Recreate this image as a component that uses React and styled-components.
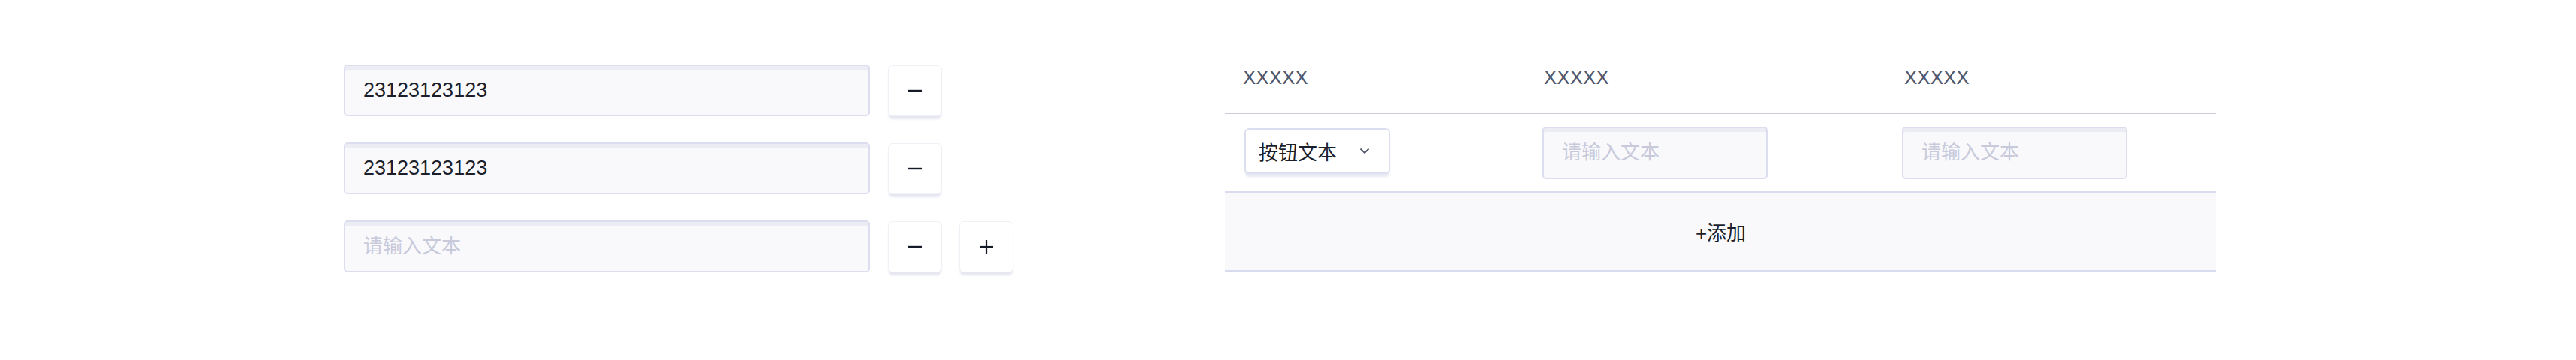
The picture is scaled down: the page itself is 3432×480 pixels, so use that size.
import React from 'react';
import styled, { createGlobalStyle } from 'styled-components';

const GlobalStyle = createGlobalStyle`
  body {
    margin: 0;
    background: #ffffff;
    font-family: "Liberation Sans", "Noto Sans CJK SC", sans-serif;
  }
`;

const Page = styled.div`
  display: flex;
  align-items: flex-start;
  width: 3432px;
  height: 480px;
  padding: 72px 0 0 458px;
  box-sizing: border-box;
`;

const Form = styled.div`
  display: flex;
  flex-direction: column;
  gap: 35px;
  margin-top: 14px;
`;

const FormRow = styled.div`
  display: flex;
  align-items: center;
`;

const TextInput = styled.input`
  box-sizing: border-box;
  width: ${({ w }) => w}px;
  height: ${({ h }) => h}px;
  padding: 0 24px;
  border: 2px solid #dcdeef;
  border-radius: 5px;
  background: #f9f9fc;
  box-shadow: inset 0 6px 0 -1px #ebecf4;
  font-family: "Liberation Sans", "Noto Sans CJK SC", sans-serif;
  font-size: 27px;
  color: #1b1f2b;
  outline: none;

  &::placeholder {
    color: #c8cadb;
    font-size: 26px;
  }
`;

const IconButton = styled.button`
  display: flex;
  align-items: center;
  justify-content: center;
  box-sizing: border-box;
  width: 72px;
  height: 68px;
  margin-left: ${({ gap }) => gap}px;
  padding: 0;
  background: #ffffff;
  border: 1px solid #f0f1f6;
  border-radius: 6px;
  box-shadow: 0 5px 3px -1px #e6e7f1;
  cursor: pointer;
`;

const Table = styled.div`
  display: grid;
  grid-template-columns: 401px 480px 440px;
  margin-left: 282px;
`;

const HeadCell = styled.div`
  padding: 11px 24px 27px;
  line-height: 40px;
  font-size: 26px;
  color: #4f576c;
  border-bottom: 2px solid #c9cddc;
`;

const BodyCell = styled.div`
  display: flex;
  align-items: center;
  height: 103px;
  padding-left: ${({ pad }) => pad}px;
  border-bottom: 2px solid #d9dbee;
`;

const AddRow = styled.div`
  grid-column: 1 / -1;
  display: flex;
  align-items: center;
  justify-content: center;
  height: 103px;
  background: #f9f9fb;
  border-bottom: 2px solid #d9dbee;
  font-size: 26px;
  color: #1b1f2b;
  cursor: pointer;
`;

const Select = styled.div`
  display: flex;
  align-items: center;
  box-sizing: border-box;
  width: 194px;
  height: 61px;
  margin-top: -5px;
  padding: 0 0 0 17px;
  border: 2px solid #dcdff0;
  border-radius: 6px;
  background: #ffffff;
  box-shadow: 0 5px 3px -1px #e8e9f2;
  font-size: 26px;
  color: #1b1f2b;
`;

const Chevron = styled.svg`
  margin-left: 30px;
`;

const Minus = () => (
  <svg width="20" height="20" viewBox="0 0 20 20">
    <line x1="1" y1="10" x2="19" y2="10" stroke="#151a28" strokeWidth="2.4" />
  </svg>
);

const Plus = () => (
  <svg width="22" height="22" viewBox="0 0 22 22">
    <line x1="2" y1="11" x2="20" y2="11" stroke="#151a28" strokeWidth="2.2" />
    <line x1="11" y1="2" x2="11" y2="20" stroke="#151a28" strokeWidth="2.2" />
  </svg>
);

const rows = ['23123123123', '23123123123', ''];

export default function App() {
  return (
    <>
      <GlobalStyle />
      <Page>
        <Form>
          {rows.map((value, i) => (
            <FormRow key={i}>
              <TextInput w={701} h={69} defaultValue={value} placeholder="请输入文本" />
              <IconButton gap={24}><Minus /></IconButton>
              {i === rows.length - 1 && <IconButton gap={23}><Plus /></IconButton>}
            </FormRow>
          ))}
        </Form>
        <Table>
          <HeadCell>XXXXX</HeadCell>
          <HeadCell>XXXXX</HeadCell>
          <HeadCell>XXXXX</HeadCell>
          <BodyCell pad={26}>
            <Select>
              按钮文本
              <Chevron width="14" height="9" viewBox="0 0 14 9">
                <polyline points="1.5,1.5 7,7 12.5,1.5" fill="none" stroke="#4f5669" strokeWidth="1.8" />
              </Chevron>
            </Select>
          </BodyCell>
          <BodyCell pad={22}>
            <TextInput w={300} h={70} placeholder="请输入文本" />
          </BodyCell>
          <BodyCell pad={21}>
            <TextInput w={300} h={70} placeholder="请输入文本" />
          </BodyCell>
          <AddRow>+添加</AddRow>
        </Table>
      </Page>
    </>
  );
}
